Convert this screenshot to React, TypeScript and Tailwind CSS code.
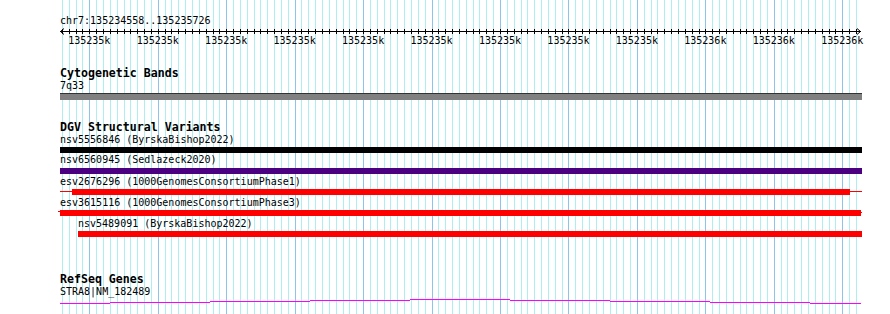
import React from 'react';

const ORIGIN = 89.3;
const MINOR = 6.845;
const gridXs = Array.from({ length: 117 }, (_, i) => i - 4).map(j => ({ x: Math.round(ORIGIN + j * MINOR) + 0.5, major: j % 10 === 0 }));
const labels = Array.from({ length: 12 }, (_, k) => ({ x: ORIGIN + k * 68.45, text: k < 9 ? '135235k' : '135236k' }));

// gene line drawn as 1px steps (start, end, row)
const geneSteps: [number, number, number][] = [
  [60, 110, 303], [110, 210, 302], [210, 310, 301], [310, 410, 300], [410, 510, 299],
  [510, 610, 300], [610, 710, 301], [710, 810, 302], [810, 861, 303],
];

function Grid() {
  return (
    <svg className="absolute inset-0" width={890} height={314} shapeRendering="crispEdges">
      {gridXs.map(g => (
        <line key={g.x} x1={g.x} x2={g.x} y1={0} y2={314} stroke={g.major ? '#8cc4ea' : '#afeef0'} strokeWidth={1} />
      ))}
    </svg>
  );
}

function Ruler() {
  return (
    <svg className="block" width={890} height={19}>
      <g shapeRendering="crispEdges" stroke="#000" strokeWidth={1}>
        <line x1={60} x2={861} y1={4.5} y2={4.5} />
        {gridXs.map(g => <line key={g.x} x1={g.x} x2={g.x} y1={2} y2={7} />)}
      </g>
      <path d="M64 1.5 L60.5 4.5 L64 7.5" fill="none" stroke="#000" strokeWidth={1} />
      <path d="M857 1.5 L860.5 4.5 L857 7.5" fill="none" stroke="#000" strokeWidth={1} />
      {labels.map((l, i) => (
        <text key={i} x={l.x} y={17} textAnchor="middle" fontSize={10} fontFamily="DejaVu Sans Mono, monospace" fill="#000">{l.text}</text>
      ))}
    </svg>
  );
}

const Label = ({ children, indent = false, className = '' }: { children: React.ReactNode; indent?: boolean; className?: string }) => (
  <div className={`h-[12px] leading-[12px] whitespace-pre ${indent ? 'pl-[78px]' : 'pl-[60px]'} ${className}`}>{children}</div>
);

const Heading = ({ children, className = '' }: { children: React.ReactNode; className?: string }) => (
  <div className={`h-[13px] leading-[13px] pl-[60px] font-bold text-[11.6px] whitespace-pre ${className}`}>{children}</div>
);

export default function App() {
  return (
    <div className="relative w-[890px] h-[314px] bg-white overflow-hidden font-['DejaVu_Sans_Mono',monospace] text-[10px] text-black">
      <Grid />
      <div className="relative pt-[15px]">
        <Label>chr7:135234558..135235726</Label>
        <Ruler />

        <Heading className="mt-[21px]">Cytogenetic Bands</Heading>
        <Label>7q33</Label>
        <div className="ml-[60px] w-[802px] h-[7px] mt-[1px] bg-[#808080] border-t border-[#333]" />

        <Heading className="mt-[21px]">DGV Structural Variants</Heading>
        <Label>nsv5556846 (ByrskaBishop2022)</Label>
        <div className="ml-[60px] w-[802px] h-[6px] mt-[1px] bg-black" />

        <Label className="mt-[1px]">nsv6560945 (Sedlazeck2020)</Label>
        <div className="ml-[60px] w-[802px] h-[6px] mt-[2px] bg-[#4b0082]" />

        <Label className="mt-[2px]">esv2676296 (1000GenomesConsortiumPhase1)</Label>
        <div className="ml-[60px] w-[802px] h-[6px] mt-[1px] flex items-start">
          <div className="w-[12px] h-[1px] mt-[2px] bg-[#ff0000]" />
          <div className="w-[778px] h-[6px] bg-[#ff0000]" />
          <div className="w-[12px] h-[1px] mt-[2px] bg-[#ff0000]" />
        </div>

        <Label className="mt-[2px]">esv3615116 (1000GenomesConsortiumPhase3)</Label>
        <div className="ml-[58px] w-[804px] h-[6px] mt-[1px] flex items-start">
          <div className="w-[2px] h-[1px] mt-[1px] bg-[#ff0000]" />
          <div className="w-[801px] h-[6px] bg-[#ff0000]" />
          <div className="w-[1px] h-[1px] mt-[2px] bg-[#ff0000]" />
        </div>

        <Label indent className="mt-[2px]">nsv5489091 (ByrskaBishop2022)</Label>
        <div className="ml-[78px] w-[784px] h-[6px] mt-[1px] bg-[#ff0000]" />

        <Heading className="mt-[36px]">RefSeq Genes</Heading>
        <Label>STRA8|NM_182489</Label>
        <svg className="block" width={890} height={6} shapeRendering="crispEdges">
          {geneSteps.map(([a, b, row]) => (
            <rect key={a} x={a} y={row - 298} width={b - a} height={1} fill="#ff00ff" />
          ))}
        </svg>
      </div>
    </div>
  );
}
